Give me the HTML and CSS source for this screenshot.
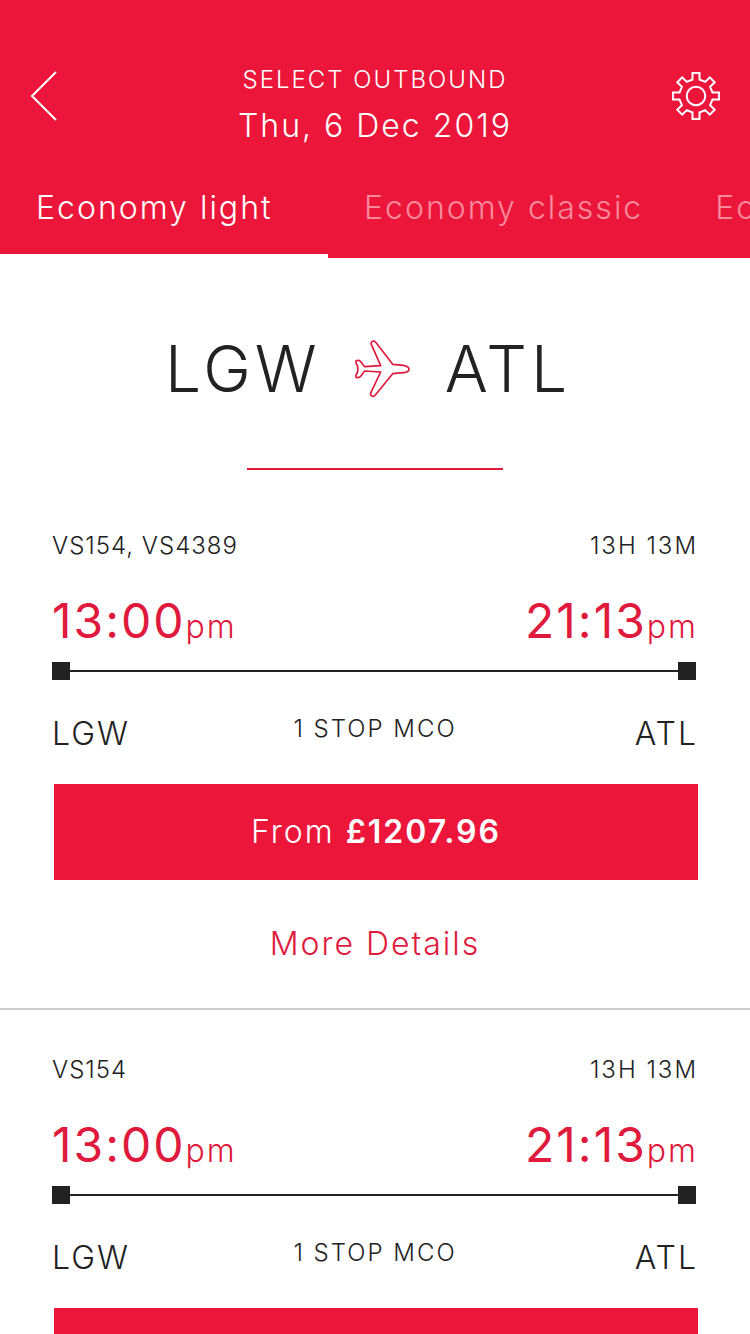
FILE: index.html
```html
<!DOCTYPE html>
<html lang="en">
<head>
    <meta charset="UTF-8">
    <meta name="viewport" content="width=device-width, initial-scale=1.0">
    <title>Select outbound</title>
    <link rel="stylesheet" href="styles.css">
</head>
<body>
    <header class="header">
        <div class="topbar">
            <button class="icon-button" type="button" aria-label="Back">
                <svg width="50" height="50" viewBox="0 0 50 50" fill="none" stroke="currentColor" stroke-width="2">
                    <path d="M27 1 3 25l24 24"/>
                </svg>
            </button>
            <div class="title">
                <h1>SELECT OUTBOUND</h1>
                <p>Thu, 6 Dec 2019</p>
            </div>
            <button class="icon-button" type="button" aria-label="Settings">
                <svg width="50" height="50" viewBox="0 0 50 50" fill="none" stroke="currentColor" stroke-width="2">
                    <path d="M21.500 2H28.500V8.500L34.200 10.900L38.800 6.300L43.700 11.200L39.100 15.800L41.500 21.500H48V28.500H41.500L39.100 34.200L43.700 38.800L38.800 43.700L34.200 39.100L28.500 41.500V48H21.500V41.500L15.800 39.100L11.200 43.700L6.300 38.800L10.900 34.200L8.500 28.500H2V21.500H8.500L10.900 15.800L6.300 11.200L11.200 6.300L15.800 10.900L21.500 8.500Z"/>
                    <circle cx="25" cy="25" r="9.300"/>
                </svg>
            </button>
        </div>
        <nav class="tabs">
            <a class="tab active" href="#light">Economy light</a>
            <a class="tab" href="#classic">Economy classic</a>
            <a class="tab" href="#delight">Economy delight</a>
        </nav>
    </header>

    <main>
        <section class="route">
            <h2>
                <span>LGW</span>
                <svg width="56" height="58" viewBox="41 32 168 174" fill="none" stroke="currentColor" stroke-width="5" stroke-linejoin="round">
                    <path d="M154 105 186 108Q203 111 203 120T186 130L154 133 102 197Q96 204 90 199 86 196 89 189L118 128 70 125 57 142Q53 146 44 144V137Q50 130 50 120T44 101V94Q53 91 57 96L70 112 118 109 90 45Q88 38 94 36 100 34 105 41Z"/>
                </svg>
                <span>ATL</span>
            </h2>
        </section>

        <!-- Flights -->
        <article class="flight">
            <div class="row info">
                <span class="codes">VS154, VS4389</span>
                <span>13H 13M</span>
            </div>
            <div class="row times">
                <time datetime="13:00">13:00<small>pm</small></time>
                <time datetime="21:13">21:13<small>pm</small></time>
            </div>
            <div class="track"></div>
            <div class="places">
                <span>LGW</span>
                <span class="stops">1 STOP MCO</span>
                <span class="arrival">ATL</span>
            </div>
            <button class="price" type="button">From <strong>£1207.96</strong></button>
            <a class="more" href="#details">More Details</a>
        </article>

        <article class="flight">
            <div class="row info">
                <span class="codes">VS154</span>
                <span>13H 13M</span>
            </div>
            <div class="row times">
                <time datetime="13:00">13:00<small>pm</small></time>
                <time datetime="21:13">21:13<small>pm</small></time>
            </div>
            <div class="track"></div>
            <div class="places">
                <span>LGW</span>
                <span class="stops">1 STOP MCO</span>
                <span class="arrival">ATL</span>
            </div>
            <button class="price" type="button">From <strong>£1207.96</strong></button>
            <a class="more" href="#details">More Details</a>
        </article>
    </main>
</body>
</html>
```
FILE: styles.css
```css
* {
    box-sizing: border-box;
}
body {
    margin: 0;
    background-color: #fff;
    color: #222;
    font-family: Inter, "Liberation Sans", sans-serif;
    font-weight: 300;
    font-size: 32px;
    line-height: 40px;
    letter-spacing: 2px;
}
h1, h2, p {
    margin: 0;
    font-weight: inherit;
}
button {
    border: none;
    padding: 0;
    background: none;
    color: inherit;
    font: inherit;
    letter-spacing: inherit;
    cursor: pointer;
}
a {
    color: inherit;
    text-decoration: none;
}
svg {
    display: block;
}

/* Header */
.header {
    background-color: #ec163a;
    color: #fff;
    padding-top: 65px;
}
.topbar {
    display: flex;
    justify-content: space-between;
    align-items: flex-start;
    padding: 0 29px;
}
.icon-button {
    margin-top: 6px;
}
.title {
    text-align: center;
}
.title h1 {
    font-size: 24px;
    line-height: 30px;
    margin-bottom: 11px;
}
.tabs {
    display: flex;
    margin-top: 42px;
    overflow: hidden;
}
.tab {
    flex: none;
    min-width: 328px;
    padding: 0 36px 26px;
    border-bottom: 4px solid transparent;
    color: #f78a9c;
}
.tab.active {
    color: #fff;
    border-bottom-color: #fff;
}

/* Route */
.route {
    display: flex;
    flex-direction: column;
    align-items: center;
    padding: 71px 0 16px;
}
.route h2 {
    display: flex;
    align-items: center;
    gap: 34px;
    padding-right: 14px;
    font-size: 64px;
    line-height: 80px;
    letter-spacing: 4px;
}
.route svg {
    color: #e01a3c;
}
.route::after {
    content: "";
    width: 256px;
    height: 2px;
    margin-top: 59px;
    background-color: #e01a3c;
}

/* Flight card */
.flight {
    display: flex;
    flex-direction: column;
    padding: 45px 52px 44px;
    border-bottom: 2px solid #ccc;
}
.row {
    display: flex;
    justify-content: space-between;
}
.info, .stops {
    font-size: 24px;
    line-height: 30px;
}
.codes {
    letter-spacing: 1px;
}
.times {
    margin: 30px 0 11px;
    font-size: 48px;
    line-height: 60px;
    font-weight: 400;
    color: #e01a3c;
}
.times small {
    font-size: 32px;
    line-height: 1;
    font-weight: 300;
}
.track {
    height: 18px;
    margin-right: 2px;
    background:
        linear-gradient(#222, #222) left / 18px 18px no-repeat,
        linear-gradient(#222, #222) right / 18px 18px no-repeat,
        linear-gradient(#222, #222) center / 100% 2px no-repeat;
}
.places {
    display: grid;
    grid-template-columns: 1fr auto 1fr;
    align-items: start;
    margin: 34px 0 30px;
}
.arrival {
    text-align: right;
}
.price {
    height: 96px;
    margin-left: 2px;
    background-color: #ec163a;
    color: #fff;
}
.price strong {
    font-weight: 600;
}
.more {
    align-self: center;
    margin-top: 44px;
    color: #e01a3c;
}
```
